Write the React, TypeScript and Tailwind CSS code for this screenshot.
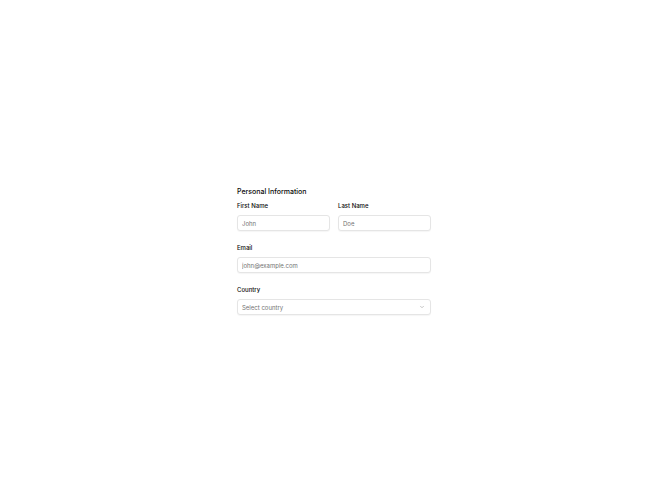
import { ChevronDown } from 'lucide-react';

export default function App() {
  const inputCls =
    'h-[16px] w-full rounded-[3px] border border-[#e5e5e5] bg-white px-[4px] text-[6px] text-[#0a0a0a] shadow-[0_1px_1px_rgba(0,0,0,0.04)] outline-none placeholder:text-[#737373]';

  return (
    <div className="min-h-screen w-full flex items-center justify-center bg-white font-['Inter',sans-serif] text-[#0a0a0a]">
      <div className="w-[194px] flex flex-col">
        <h2 className="text-[7px] leading-[12px] font-medium mb-[3px]">Personal Information</h2>
        <div className="flex flex-col gap-[12px]">
          <div className="grid grid-cols-2 gap-[8px]">
            <div className="flex flex-col gap-[4px]">
              <label className="text-[6px] leading-[10px] font-medium">First Name</label>
              <input placeholder="John" className={inputCls} />
            </div>
            <div className="flex flex-col gap-[4px]">
              <label className="text-[6px] leading-[10px] font-medium">Last Name</label>
              <input placeholder="Doe" className={inputCls} />
            </div>
          </div>
          <div className="flex flex-col gap-[4px]">
            <label className="text-[6px] leading-[10px] font-medium">Email</label>
            <input placeholder="john@example.com" className={inputCls} />
          </div>
          <div className="flex flex-col gap-[4px]">
            <label className="text-[6px] leading-[10px] font-medium">Country</label>
            <button className="h-[16px] w-full rounded-[3px] border border-[#e5e5e5] bg-white px-[4px] text-[6px] text-[#737373] shadow-[0_1px_1px_rgba(0,0,0,0.04)] flex items-center justify-between">
              <span>Select country</span>
              <ChevronDown size={6} strokeWidth={2.5} className="text-[#a3a3a3] mr-[1px]" />
            </button>
          </div>
        </div>
      </div>
    </div>
  );
}
